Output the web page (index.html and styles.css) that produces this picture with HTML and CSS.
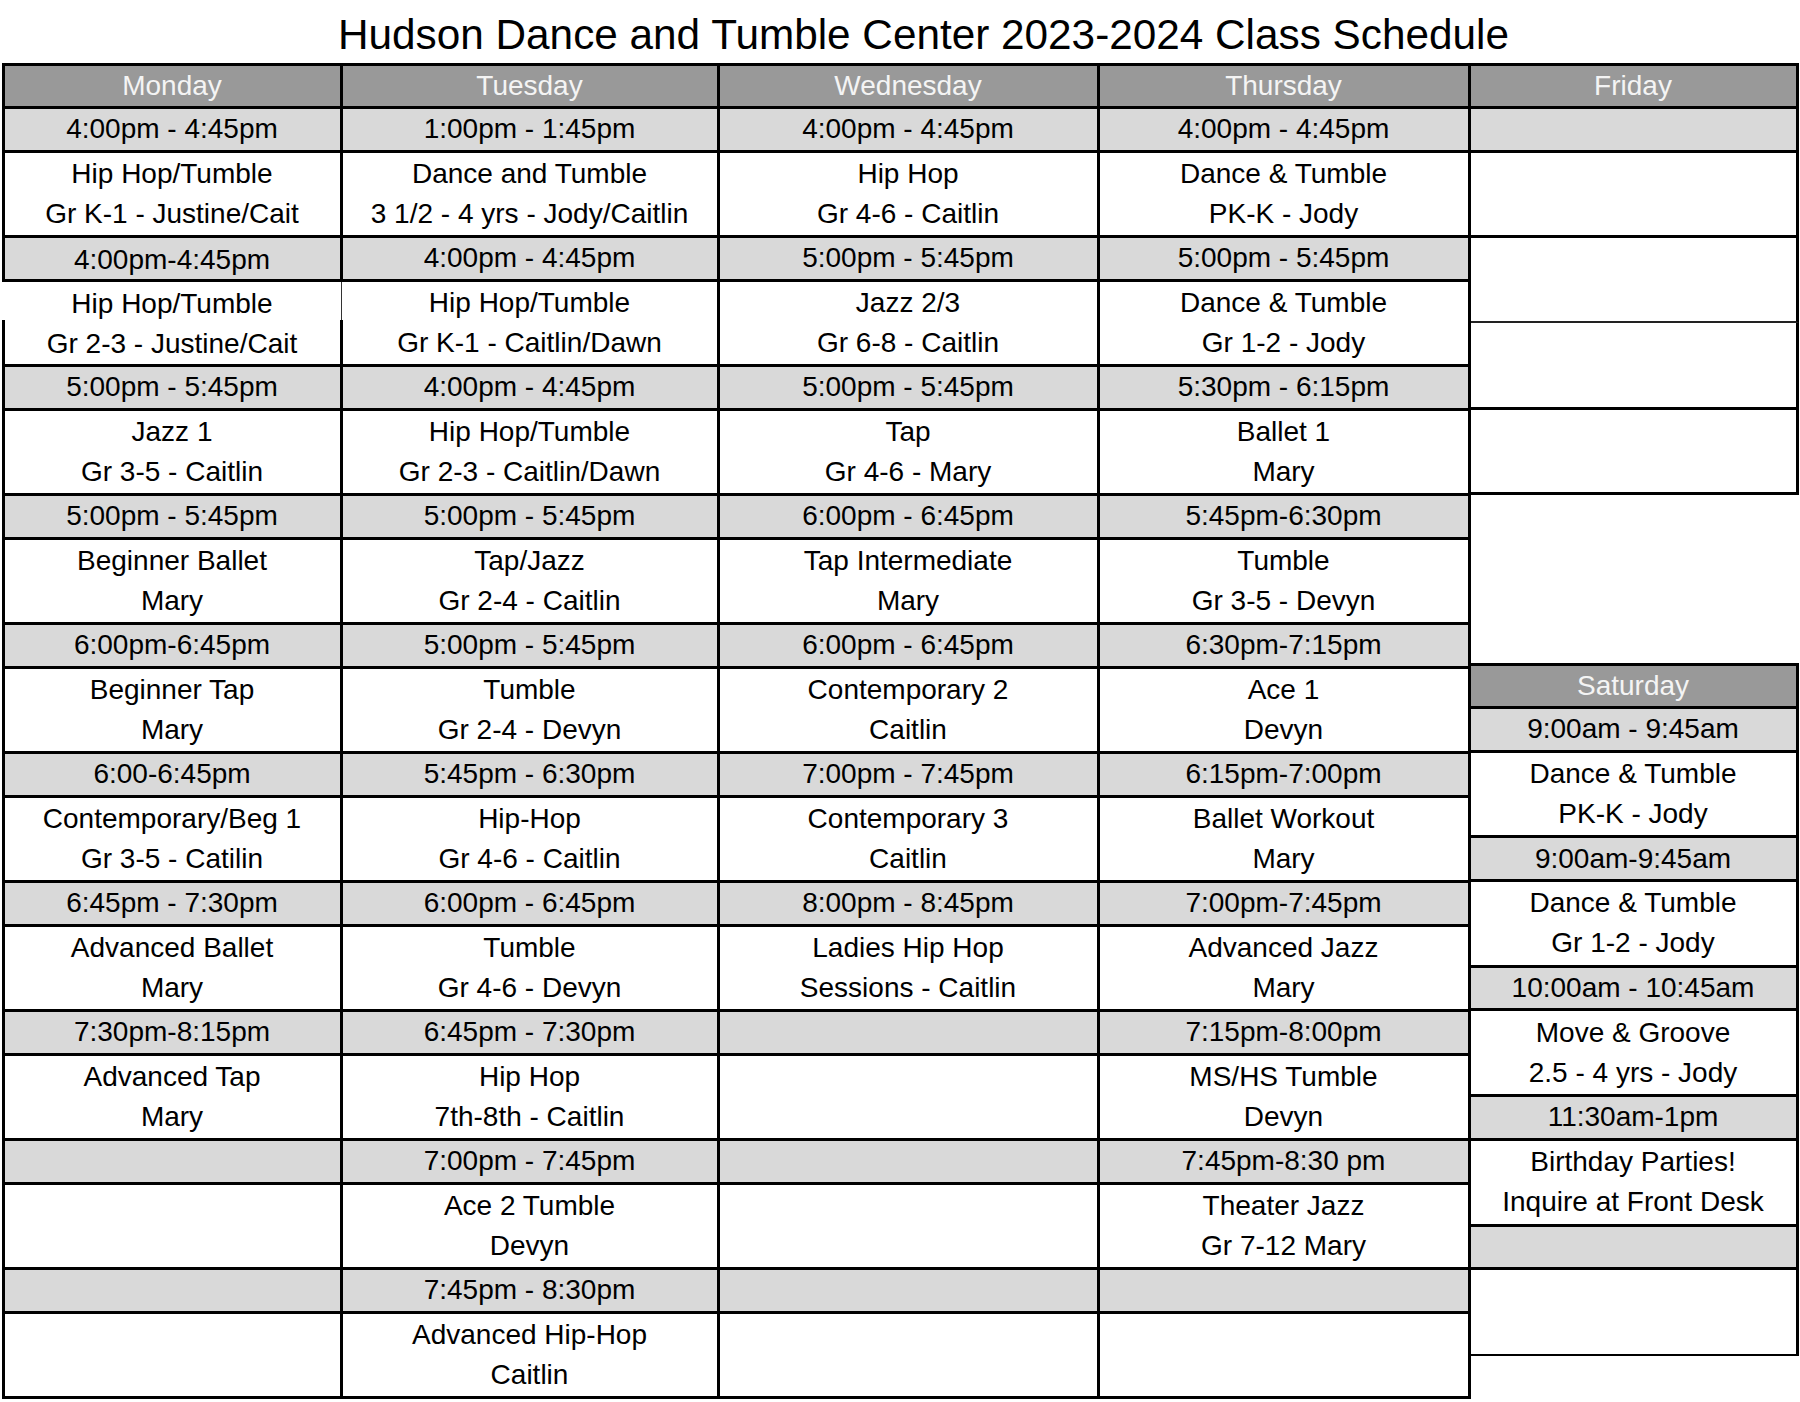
FILE: index.html
```html
<!DOCTYPE html>
<html lang="en">
<head>
<meta charset="utf-8">
<title>Hudson Dance and Tumble Center 2023-2024 Class Schedule</title>
<link rel="stylesheet" href="styles.css">
</head>
<body>
<h1 class="title">Hudson Dance and Tumble Center 2023-2024 Class Schedule</h1>
<div class="page">
  <div class="grid">
    <div class="hd">Monday</div><div class="hd">Tuesday</div><div class="hd">Wednesday</div><div class="hd">Thursday</div>

    <div class="tm">4:00pm - 4:45pm</div><div class="tm">1:00pm - 1:45pm</div><div class="tm">4:00pm - 4:45pm</div><div class="tm">4:00pm - 4:45pm</div>
    <div class="cl"><span>Hip Hop/Tumble</span><span>Gr K-1 - Justine/Cait</span></div><div class="cl"><span>Dance and Tumble</span><span>3 1/2 - 4 yrs - Jody/Caitlin</span></div><div class="cl"><span>Hip Hop</span><span>Gr 4-6 - Caitlin</span></div><div class="cl"><span>Dance &amp; Tumble</span><span>PK-K - Jody</span></div>

    <div class="tm low">4:00pm-4:45pm</div><div class="tm">4:00pm - 4:45pm</div><div class="tm">5:00pm - 5:45pm</div><div class="tm">5:00pm - 5:45pm</div>
    <div class="cl broken low"><span>Hip Hop/Tumble</span><span>Gr 2-3 - Justine/Cait</span></div><div class="cl"><span>Hip Hop/Tumble</span><span>Gr K-1 - Caitlin/Dawn</span></div><div class="cl"><span>Jazz 2/3</span><span>Gr 6-8 - Caitlin</span></div><div class="cl"><span>Dance &amp; Tumble</span><span>Gr 1-2 - Jody</span></div>

    <div class="tm">5:00pm - 5:45pm</div><div class="tm">4:00pm - 4:45pm</div><div class="tm">5:00pm - 5:45pm</div><div class="tm">5:30pm - 6:15pm</div>
    <div class="cl"><span>Jazz 1</span><span>Gr 3-5 - Caitlin</span></div><div class="cl"><span>Hip Hop/Tumble</span><span>Gr 2-3 - Caitlin/Dawn</span></div><div class="cl"><span>Tap</span><span>Gr 4-6 - Mary</span></div><div class="cl"><span>Ballet 1</span><span>Mary</span></div>

    <div class="tm">5:00pm - 5:45pm</div><div class="tm">5:00pm - 5:45pm</div><div class="tm">6:00pm - 6:45pm</div><div class="tm">5:45pm-6:30pm</div>
    <div class="cl"><span>Beginner Ballet</span><span>Mary</span></div><div class="cl"><span>Tap/Jazz</span><span>Gr 2-4 - Caitlin</span></div><div class="cl"><span>Tap Intermediate</span><span>Mary</span></div><div class="cl"><span>Tumble</span><span>Gr 3-5 - Devyn</span></div>

    <div class="tm">6:00pm-6:45pm</div><div class="tm">5:00pm - 5:45pm</div><div class="tm">6:00pm - 6:45pm</div><div class="tm">6:30pm-7:15pm</div>
    <div class="cl"><span>Beginner Tap</span><span>Mary</span></div><div class="cl"><span>Tumble</span><span>Gr 2-4 - Devyn</span></div><div class="cl"><span>Contemporary 2</span><span>Caitlin</span></div><div class="cl"><span>Ace 1</span><span>Devyn</span></div>

    <div class="tm">6:00-6:45pm</div><div class="tm">5:45pm - 6:30pm</div><div class="tm">7:00pm - 7:45pm</div><div class="tm">6:15pm-7:00pm</div>
    <div class="cl"><span>Contemporary/Beg 1</span><span>Gr 3-5 - Catilin</span></div><div class="cl"><span>Hip-Hop</span><span>Gr 4-6 - Caitlin</span></div><div class="cl"><span>Contemporary 3</span><span>Caitlin</span></div><div class="cl"><span>Ballet Workout</span><span>Mary</span></div>

    <div class="tm">6:45pm - 7:30pm</div><div class="tm">6:00pm - 6:45pm</div><div class="tm">8:00pm - 8:45pm</div><div class="tm">7:00pm-7:45pm</div>
    <div class="cl"><span>Advanced Ballet</span><span>Mary</span></div><div class="cl"><span>Tumble</span><span>Gr 4-6 - Devyn</span></div><div class="cl"><span>Ladies Hip Hop</span><span>Sessions - Caitlin</span></div><div class="cl"><span>Advanced Jazz</span><span>Mary</span></div>

    <div class="tm">7:30pm-8:15pm</div><div class="tm">6:45pm - 7:30pm</div><div class="tm"></div><div class="tm">7:15pm-8:00pm</div>
    <div class="cl"><span>Advanced Tap</span><span>Mary</span></div><div class="cl"><span>Hip Hop</span><span>7th-8th - Caitlin</span></div><div class="cl"></div><div class="cl"><span>MS/HS Tumble</span><span>Devyn</span></div>

    <div class="tm"></div><div class="tm">7:00pm - 7:45pm</div><div class="tm"></div><div class="tm">7:45pm-8:30 pm</div>
    <div class="cl"></div><div class="cl"><span>Ace 2 Tumble</span><span>Devyn</span></div><div class="cl"></div><div class="cl"><span>Theater Jazz</span><span>Gr 7-12 Mary</span></div>

    <div class="tm"></div><div class="tm">7:45pm - 8:30pm</div><div class="tm"></div><div class="tm"></div>
    <div class="cl"></div><div class="cl"><span>Advanced Hip-Hop</span><span>Caitlin</span></div><div class="cl"></div><div class="cl"></div>
  </div>

  <div class="side">
    <div class="box hd first">Friday</div>
    <div class="box tm"></div>
    <div class="box cl"></div>
    <div class="box cl half thin"></div>
    <div class="box cl half"></div>
    <div class="box cl"></div>

    <div class="sat">
      <div class="box hd first">Saturday</div>
      <div class="box tm">9:00am - 9:45am</div>
      <div class="box cl"><span>Dance &amp; Tumble</span><span>PK-K - Jody</span></div>
      <div class="box tm">9:00am-9:45am</div>
      <div class="box cl"><span>Dance &amp; Tumble</span><span>Gr 1-2 - Jody</span></div>
      <div class="box tm">10:00am - 10:45am</div>
      <div class="box cl"><span>Move &amp; Groove</span><span>2.5 - 4 yrs - Jody</span></div>
      <div class="box tm">11:30am-1pm</div>
      <div class="box cl"><span>Birthday Parties!</span><span>Inquire at Front Desk</span></div>
      <div class="box tm"></div>
      <div class="box cl last"></div>
    </div>
  </div>
</div>
</body>
</html>
```
FILE: styles.css
```css
* { box-sizing: border-box; }

html, body {
  margin: 0;
  padding: 0;
  background: #ffffff;
}

body {
  width: 1800px;
  height: 1402px;
  overflow: hidden;
  font-family: "Liberation Sans", Arial, Helvetica, sans-serif;
  color: #000;
}

.title {
  margin: 0;
  height: 63px;
  padding: 12px 0 0 47px;
  text-align: center;
  font-weight: normal;
  font-size: 42.3px;
  line-height: 46px;
  letter-spacing: 0;
}

.page {
  display: flex;
  align-items: flex-start;
  margin-left: 1.5px;
}

.grid {
  display: grid;
  background: #000;
  padding: 3px;
  gap: 3px;
  grid-template-columns: 335px 374px 377px 368px;
  grid-template-rows: 40px repeat(10, 40.5px 82.5px);
}

.hd, .tm, .cl {
  display: flex;
  flex-direction: column;
  align-items: center;
  justify-content: center;
  font-size: 28px;
  white-space: nowrap;
}

.hd {
  background: #999999;
  color: #f4f4f4;
  line-height: 40px;
}

.tm {
  background: #d9d9d9;
  line-height: 40px;
}

.cl {
  background: #ffffff;
  line-height: 40px;
}

.low { padding-top: 4px; }
.cl.low { padding-top: 3px; }

.broken { position: relative; }
.broken::before {
  content: "";
  position: absolute;
  left: -3px;
  top: 0;
  width: 3px;
  height: 47%;
  background: #fff;
}
.broken::after {
  content: "";
  position: absolute;
  right: -3px;
  top: 0;
  width: 3px;
  height: 47%;
  background: linear-gradient(90deg, #fff 0 1px, #333 1px 2px, #fff 2px);
}

/* Friday / Saturday column */
.side {
  width: 328px;
  display: flex;
  flex-direction: column;
}

.box {
  border-right: 3px solid #000;
  border-bottom: 3px solid #000;
}

.box.first {
  border-top: 3px solid #000;
}

.box.hd { height: 46px; }
.box.tm { height: 43.5px; }
.box.cl { height: 85.5px; }
.box.cl.half { height: 86.5px; }
.box.cl.thin { height: 85px; border-bottom: 2px solid #222; }
.box.cl.last { border-bottom-width: 2.5px; }

.sat {
  display: flex;
  flex-direction: column;
  margin-top: 167.5px;
}

.sat .box.hd { height: 46.5px; }
.sat .box.tm { height: 43.7px; }
.sat .box.cl { height: 85.7px; }
```
